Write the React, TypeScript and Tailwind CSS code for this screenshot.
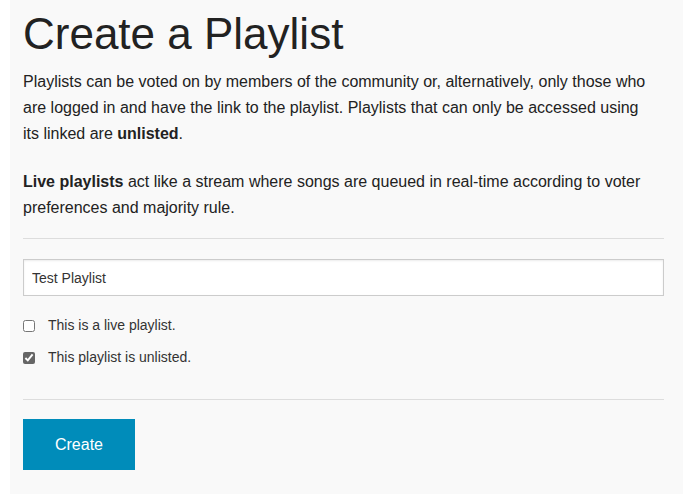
export default function App() {
    return (
        <div className="min-h-[494px] bg-white pl-[10px] pr-[12px]" style={{ fontFamily: '"Liberation Sans", Arial, sans-serif' }}>
            <div className="min-h-[494px] bg-[#f9f9f9] pl-[13px] pr-[19px] pt-[8px]">

                {/* TITLE */}
                <h1 className="text-[44px] leading-[52px] text-[#222]">
                    Create a Playlist
                </h1>

                {/* INTRO */}
                <p className="mt-[9px] text-[16px] leading-[26px] text-[#222] whitespace-nowrap">
                    Playlists can be voted on by members of the community or, alternatively, only those who<br />
                    are logged in and have the link to the playlist. Playlists that can only be accessed using<br />
                    its linked are <b>unlisted</b>.
                </p>

                <p className="mt-[22px] text-[16px] leading-[26px] text-[#222] whitespace-nowrap">
                    <b>Live playlists</b> act like a stream where songs are queued in real-time according to voter<br />
                    preferences and majority rule.
                </p>

                <hr className="mt-[17px] border-t border-[#ddd]" />

                {/* FORM */}
                <input
                    type="text"
                    defaultValue="Test Playlist"
                    className="mt-[20px] block w-full h-[37px] bg-white border border-[#ccc] px-[8px] text-[14px] text-[#333] shadow-[inset_0_1px_2px_rgba(0,0,0,0.08)] focus:outline-none"
                />

                <label className="mt-[19px] flex items-center gap-[13px] text-[14px] text-[#333]">
                    <input type="checkbox" className="w-[12px] h-[12px] accent-[#666]" />
                    This is a live playlist.
                </label>

                <label className="mt-[11px] flex items-center gap-[13px] text-[14px] text-[#333]">
                    <input type="checkbox" defaultChecked className="w-[12px] h-[12px] accent-[#666]" />
                    This playlist is unlisted.
                </label>

                <hr className="mt-[31px] border-t border-[#ddd]" />

                <button className="mt-[19px] w-[112px] h-[51px] bg-[#008cba] text-white text-[16px]">
                    Create
                </button>
            </div>
        </div>
    );
}
